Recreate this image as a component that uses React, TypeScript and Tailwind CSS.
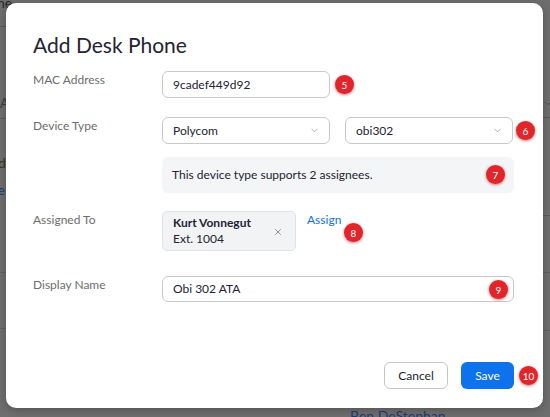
import { ChevronDown, X } from 'lucide-react';
import type { ReactNode } from 'react';

const font = { fontFamily: 'Lato, "Open Sans", Arial, sans-serif' };

// red numbered callout
const Badge = ({ n, className = '' }: { n: number; className?: string }) => (
  <span
    className={`absolute flex h-[19px] w-[19px] items-center justify-center rounded-full bg-[#e1252b] text-[10px] leading-none text-white shadow-[0_1px_3px_rgba(160,0,0,0.55)] ${className}`}
  >
    {n}
  </span>
);

const Row = ({ label, children }: { label: string; children: ReactNode }) => (
  <div className="flex">
    <div className="w-[129px] shrink-0 text-[12px] leading-[18px] text-[#6d6d6d]">{label}</div>
    <div className="flex-1">{children}</div>
  </div>
);

const Select = ({ value, badge }: { value: string; badge?: number }) => (
  <div className="relative flex h-[27px] w-[168px] items-center justify-between rounded-[6px] border border-[#c9c9c9] bg-white pl-[10px] pr-[9px] text-[12px] text-[#232333]">
    <span>{value}</span>
    <ChevronDown size={11} strokeWidth={1.5} className="text-[#8a8a8a]" />
    {badge && <Badge n={badge} className="right-[-23px] top-[3px]" />}
  </div>
);

export default function App() {
  return (
    <div className="relative h-[417px] w-[550px] overflow-hidden bg-[#6e6e6e] pl-[6px] pt-[3px]" style={font}>
      {/* dimmed page behind the dialog */}
      <div className="absolute inset-0">
        <span className="absolute left-[-3px] top-[-8px] text-[14px] text-[#2a2a2a]">ne</span>
        <div className="absolute left-0 top-[26px] h-px w-[8px] bg-[#5a5a5a]" />
        <span className="absolute left-[0px] top-[94px] text-[13px] text-[#3a3a3a]">A</span>
        <div className="absolute left-0 top-[118px] h-px w-[8px] bg-[#5a5a5a]" />
        <span className="absolute left-[-2px] top-[152px] text-[14px] text-[#3a3520]">d</span>
        <span className="absolute left-[-2px] top-[181px] text-[13px] text-[#1f3b75]">e</span>
        <div className="absolute left-0 top-[272px] h-px w-[8px] bg-[#5f5f5f]" />
        <div className="absolute left-0 top-[328px] h-px w-[8px] bg-[#5f5f5f]" />
        <ChevronDown size={9} className="absolute right-[-2px] top-[99px] text-[#4a4a4a]" />
        <div className="absolute right-0 top-[117px] h-px w-[8px] bg-[#5a5a5a]" />
        <div className="absolute right-0 top-[215px] h-px w-[8px] bg-[#5a5a5a]" />
        <div className="absolute right-0 top-[272px] h-px w-[8px] bg-[#5f5f5f]" />
        <div className="absolute right-0 top-[330px] h-px w-[8px] bg-[#5f5f5f]" />
        <span className="absolute left-[350px] top-[405px] text-[14px] text-[#1f3a70]">Ben DeStephan</span>
      </div>

      <div className="relative flex h-[405px] w-[537px] flex-col rounded-[10px] bg-white pl-[27px] pr-[29px] pt-[28px] shadow-[0_2px_8px_rgba(0,0,0,0.25)]">
        <h1 className="text-[21px] leading-[28px] text-[#232333]">Add Desk Phone</h1>

        <div className="mt-[12px]">
          <Row label="MAC Address">
            <div className="relative flex h-[27px] w-[168px] items-center rounded-[6px] border border-[#c9c9c9] pl-[10px] text-[12px] text-[#232333]">
              9cadef449d92
              <Badge n={5} className="right-[-25px] top-[3px]" />
            </div>
          </Row>
        </div>

        <div className="mt-[19px]">
          <Row label="Device Type">
            <div className="flex gap-[15px]">
              <Select value="Polycom" />
              <div className="w-[169px]">
                <Select value="obi302" badge={6} />
              </div>
            </div>
            <div className="relative mt-[13px] flex h-[36px] items-center rounded-[6px] bg-[#f4f5f7] pl-[10px] text-[12px] text-[#232333]">
              This device type supports 2 assignees.
              <Badge n={7} className="right-[9px] top-[8px]" />
            </div>
          </Row>
        </div>

        <div className="mt-[18px]">
          <Row label="Assigned To">
            <div className="flex items-start">
              <div className="flex h-[40px] w-[134px] items-center justify-between rounded-[5px] border border-[#e1e2e5] bg-[#f2f3f5] pl-[10px] pr-[12px] text-[12px] leading-[16px] text-[#232333]">
                <div>
                  <div className="font-bold">Kurt Vonnegut</div>
                  <div>Ext. 1004</div>
                </div>
                <X size={10} strokeWidth={1.5} className="mt-[2px] text-[#555]" />
              </div>
              <div className="relative ml-[11px] mt-[1px] text-[12px] leading-[16px] text-[#0e71eb]">
                Assign
                <Badge n={8} className="left-[37px] top-[11px]" />
              </div>
            </div>
          </Row>
        </div>

        <div className="mt-[25px]">
          <Row label="Display Name">
            <div className="relative flex h-[26px] items-center rounded-[6px] border border-[#c9c9c9] pl-[10px] text-[12px] text-[#232333]">
              Obi 302 ATA
              <Badge n={9} className="right-[5px] top-[3px]" />
            </div>
          </Row>
        </div>

        <div className="mt-[60px] flex justify-end gap-[13px]">
          <button className="h-[27px] w-[64px] rounded-[6px] border border-[#c6c6c6] bg-white text-[12px] text-[#232333]">
            Cancel
          </button>
          <button className="relative h-[27px] w-[53px] rounded-[6px] bg-[#0e72ed] text-[12px] text-white">
            Save
            <Badge n={10} className="right-[-24px] top-[4px]" />
          </button>
        </div>
      </div>
    </div>
  );
}
